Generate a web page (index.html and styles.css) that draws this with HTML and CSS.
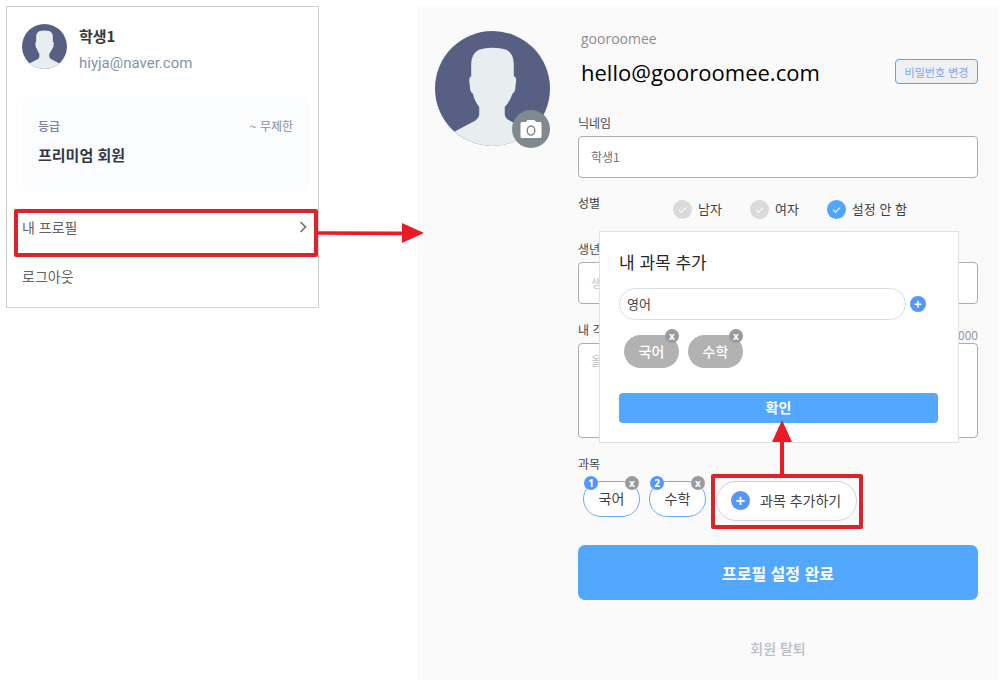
FILE: index.html
```html
<!DOCTYPE html>
<html lang="ko">
<head>
<meta charset="utf-8">
<meta name="viewport" content="width=device-width, initial-scale=1">
<title>내 프로필</title>
<link rel="stylesheet" href="styles.css">
</head>
<body>
<svg class="defs" aria-hidden="true">
  <symbol id="person" viewBox="75 93 343 343">
    <clipPath id="round"><circle cx="246.500" cy="264.500" r="171.500"/></clipPath>
    <g clip-path="url(#round)">
      <rect x="75" y="93" width="343" height="343" fill="#576083"/>
      <path fill="#e8eef0" d="M183 228V190Q184 160 206 149Q224 143 246 143Q270 143 288 149Q309 160 310 190V228Q317 230 317 240L314 268Q312 277 306 280Q298 304 283 320V340Q283 351 293 358L360 394L400 440H90L134 393L197 359Q207 351 207 342V320Q194 304 188 280Q182 277 180 268L177 240Q177 230 183 228Z"/>
    </g>
  </symbol>
  <symbol id="plus" viewBox="0 0 16 16">
    <circle cx="8" cy="8" r="8" fill="#5596fb"/>
    <path d="M8 4.800V11.800M4.500 8.300H11.500" stroke="#fff" stroke-width="1.500"/>
  </symbol>
</svg>
<main class="page">
  <aside class="account">
    <div class="user">
      <svg class="user-avatar" role="img" aria-label="학생1"><use href="#person"/></svg>
      <div>
        <p class="user-name">학생1</p>
        <p class="user-mail">hiyja@naver.com</p>
      </div>
    </div>
    <section class="grade">
      <div class="grade-top"><span class="grade-label">등급</span><span class="grade-term">~ 무제한</span></div>
      <p class="grade-name">프리미엄 회원</p>
    </section>
    <nav>
      <div class="menu-mark">
        <a class="menu-link" href="#profile">내 프로필
          <svg class="chevron" viewBox="0 0 8 12" aria-hidden="true"><path d="M1.500 1L6.500 6L1.500 11" fill="none" stroke="#707275" stroke-width="1.700"/></svg>
        </a>
        <svg class="arrow-right" viewBox="0 0 108 20" aria-hidden="true"><path d="M0 8.200L86 8.600V0L108 10L86 20V12.200L0 11.800Z" fill="#e91c26"/></svg>
      </div>
      <a class="menu-link logout" href="#logout">로그아웃</a>
    </nav>
  </aside>

  <section class="profile" id="profile">
    <div class="photo">
      <svg class="photo-image" role="img" aria-label="프로필 사진"><use href="#person"/></svg>
      <button class="camera" type="button" aria-label="사진 변경">
        <svg viewBox="0 0 22 20" aria-hidden="true"><path fill="#fff" d="M2 3H6L7.500 1H14.500L16 3H20Q21.500 3 21.500 4.500V17.500Q21.500 19 20 19H2Q.5 19 .5 17.500V4.500Q.5 3 2 3Z"/><ellipse cx="11" cy="11.500" rx="3.800" ry="4.500" fill="none" stroke="#7f8a8e" stroke-width="1.400"/></svg>
      </button>
    </div>
    <form class="form">
      <header class="identity">
        <div>
          <p class="org">gooroomee</p>
          <h1 class="mail">hello@gooroomee.com</h1>
        </div>
        <button class="password" type="button">비밀번호 변경</button>
      </header>
      <label class="label" for="nick">닉네임</label>
      <input class="field" id="nick" type="text" value="학생1">
      <div class="details">
        <div class="gender" role="radiogroup" aria-labelledby="gender-label">
          <span class="gender-label" id="gender-label">성별</span>
          <label class="option"><input type="radio" name="gender">남자</label>
          <label class="option"><input type="radio" name="gender">여자</label>
          <label class="option"><input type="radio" name="gender" checked>설정 안 함</label>
        </div>
        <label class="label" for="birth">생년월일</label>
        <input class="field" id="birth" type="text" placeholder="생년월일">
        <div class="label-row"><label class="label" for="memo">내 각오</label><span class="count">0/1000</span></div>
        <textarea class="field memo" id="memo" placeholder="올해의 각오"></textarea>
        <section class="dialog" role="dialog" aria-labelledby="dialog-title">
          <h2 class="dialog-title" id="dialog-title">내 과목 추가</h2>
          <div class="entry">
            <input class="entry-input" type="text" value="영어" aria-label="과목">
            <button class="icon-button" type="button" aria-label="추가"><svg class="plus"><use href="#plus"/></svg></button>
          </div>
          <ul class="chips chips-grey">
            <li class="chip grey">국어<button class="badge remove" type="button" aria-label="국어 삭제">x</button></li>
            <li class="chip grey">수학<button class="badge remove" type="button" aria-label="수학 삭제">x</button></li>
          </ul>
          <button class="confirm" type="button">확인</button>
        </section>
      </div>
      <p class="label subject-label">과목</p>
      <div class="subjects">
        <ul class="chips">
          <li class="chip">국어<span class="badge order">1</span><button class="badge remove" type="button" aria-label="국어 삭제">x</button></li>
          <li class="chip">수학<span class="badge order">2</span><button class="badge remove" type="button" aria-label="수학 삭제">x</button></li>
        </ul>
        <div class="add-mark">
          <button class="add" type="button"><svg class="plus plus-large"><use href="#plus"/></svg>과목 추가하기</button>
          <svg class="arrow-up" viewBox="0 0 20 58" aria-hidden="true"><path d="M10 0L20 22H12V58H8V22H0Z" fill="#e91c26"/></svg>
        </div>
      </div>
      <button class="submit" type="button">프로필 설정 완료</button>
      <a class="leave" href="#leave">회원 탈퇴</a>
    </form>
  </section>
</main>
</body>
</html>
```
FILE: styles.css
```css
* { box-sizing: border-box; }

body {
  margin: 0;
  background: #fff;
  color: #3c3f44;
  font-family: "Noto Sans CJK KR", sans-serif;
  font-size: 14px;
  line-height: 20px;
}

p, h1, h2, ul { margin: 0; padding: 0; }
ul { list-style: none; }
a { color: inherit; text-decoration: none; }
button, input, textarea { font: inherit; color: inherit; }
button { padding: 0; border: 0; background: none; cursor: pointer; }
svg { display: block; }
.defs { position: absolute; width: 0; height: 0; }

.page {
  display: grid;
  grid-template-columns: 313fr 581fr;
  align-items: start;
  gap: 98px;
  padding: 6px 9px 10px 6px;
}

/* Account card */
.account {
  padding: 17px 0 17px;
  border: 1px solid #cfcfd1;
}
.user { display: flex; gap: 12px; padding: 0 15px; }
.user-avatar { width: 45px; height: 45px; }
.user-name { font-size: 15px; font-weight: 700; line-height: 24px; color: #36373b; }
.user-mail { margin-top: 4px; font-family: Roboto, sans-serif; font-size: 15px; line-height: 22px; color: #8594a8; }
.grade {
  margin: 23px 9px 0 16px;
  padding: 19px 16px 24px 15px;
  background: #fafcfe;
}
.grade-top { display: flex; justify-content: space-between; font-size: 12px; }
.grade-label { font-weight: 500; color: #7a8594; }
.grade-term { color: #8b8f94; }
.grade-name { margin-top: 7px; font-size: 15px; font-weight: 700; line-height: 24px; color: #333844; }
.menu-mark {
  position: relative;
  margin: 18px 0 0 7px;
  padding-bottom: 12px;
  border: 4px solid #dc222b;
  border-radius: 2px;
}
.menu-link {
  display: flex;
  justify-content: space-between;
  align-items: center;
  padding: 4px 7px 4px 4px;
  color: #606367;
}
.chevron { width: 8px; height: 12px; }
.arrow-right {
  position: absolute;
  top: 10px;
  left: 100%;
  width: 112px;
  height: 20px;
}
.logout { margin-top: 5px; padding-left: 15px; }

/* Profile panel */
.profile {
  display: flex;
  gap: 28px;
  padding: 25px 20px 22px 18px;
  background: #fafafa;
}
.photo { position: relative; flex: none; align-self: flex-start; }
.photo-image { width: 115px; height: 115px; }
.camera {
  position: absolute;
  right: 0;
  bottom: -2px;
  display: grid;
  place-items: center;
  width: 38px;
  height: 38px;
  border-radius: 50%;
  background: #7f8a8e;
}
.camera svg { width: 22px; height: 20px; }
.form { flex: 1; min-width: 0; display: flex; flex-direction: column; }
.identity {
  display: flex;
  justify-content: space-between;
  align-items: flex-end;
  margin-bottom: 27px;
  font-family: "Open Sans", "Noto Sans", sans-serif;
}
.identity > div { padding-left: 3px; }
.org { font-size: 14px; line-height: 16px; color: #8d8d8d; }
.mail { margin-top: 10px; font-size: 22px; font-weight: 400; line-height: 30px; color: #000; }
.password {
  width: 83px;
  height: 25px;
  margin-bottom: 3px;
  border: 1px solid #55a5f5;
  border-radius: 4px;
  background: #eff0f1;
  color: #84a5f3;
  font-family: "Noto Sans CJK KR", sans-serif;
  font-size: 11px;
}
.label { display: block; margin-bottom: 4px; font-size: 12px; line-height: 18px; color: #44474b; }
.field {
  display: block;
  width: 100%;
  height: 42px;
  padding: 0 12px 2px;
  border: 1px solid #a9adb0;
  border-radius: 4px;
  background: #fff;
  color: #6f7276;
  font-size: 12px;
}
.field::placeholder { color: #bfc1c4; }
.memo { height: 95px; padding: 7px 12px; resize: none; }
.details { position: relative; margin-top: 21px; }
.gender { display: flex; align-items: center; gap: 28px; margin-bottom: 21px; }
.gender-label { width: 67px; padding-bottom: 12px; font-size: 12px; line-height: 8px; }
.option { display: flex; align-items: center; gap: 6px; font-size: 13px; }
.option input {
  appearance: none;
  display: grid;
  place-items: center;
  width: 19px;
  height: 19px;
  margin: 0;
  border-radius: 50%;
  background: #dadada;
}
.option input::after {
  content: "";
  width: 6px;
  height: 3px;
  border: solid #fff;
  border-width: 0 0 1px 1px;
  transform: rotate(-45deg);
}
.option input:checked { background: #4fa6fc; }
.label-row { display: flex; justify-content: space-between; margin-top: 17px; }
.count { padding-top: 6px; font-size: 12px; line-height: 16px; color: #96999c; }

/* Add-subject dialog */
.dialog {
  position: absolute;
  top: 32px;
  left: 21px;
  right: 19px;
  padding: 18px 20px 19px 19px;
  border: 1px solid #dfe2e3;
  background: #fff;
}
.dialog-title { font-size: 17px; font-weight: 400; line-height: 24px; color: #25272c; }
.entry { display: flex; align-items: center; gap: 4px; margin-top: 14px; padding-right: 12px; }
.entry-input {
  flex: 1;
  min-width: 0;
  height: 32px;
  padding: 0 7px 2px;
  border: 1px solid #d8dde0;
  border-radius: 16px;
  background: #fff;
  font-size: 13px;
}
.plus { width: 16px; height: 16px; }
.plus-large { width: 19px; height: 19px; }
.chips { display: flex; gap: 9px; padding: 7px 0 0 5px; }
.chips-grey { padding-top: 15px; }
.chip {
  position: relative;
  width: 57px;
  height: 36px;
  border: 1px solid #66aef5;
  border-radius: 18px;
  background: #fff;
  font-size: 14px;
  line-height: 32px;
  text-align: center;
}
.chip.grey { width: 55px; height: 33px; border: 0; background: #b2b2b2; color: #fff; font-weight: 500; }
.badge {
  position: absolute;
  top: -6px;
  width: 14px;
  height: 14px;
  border-radius: 50%;
  color: #fff;
  font: 700 10px/14px "Noto Sans", sans-serif;
  text-align: center;
}
.order { left: 0; background: #5596fb; }
.remove { right: 0; background: #9a9a9a; line-height: 12px; }
.confirm {
  display: block;
  width: 100%;
  height: 30px;
  margin-top: 25px;
  padding-bottom: 2px;
  border-radius: 4px;
  background: #52a8fe;
  color: #fff;
  font-weight: 700;
}

/* Subjects */
.subject-label { margin: 17px 0 1px; }
.subjects { display: flex; align-items: flex-start; gap: 5px; }
.add-mark { position: relative; border: 4px solid #dc222b; border-radius: 2px; padding: 3px 2px 4px 1px; }
.add {
  display: flex;
  align-items: center;
  gap: 10px;
  height: 40px;
  padding: 0 15px 2px 14px;
  border: 1px solid #cfd4db;
  border-radius: 20px;
  background: #fff;
  white-space: nowrap;
}
.arrow-up { position: absolute; bottom: 100%; left: 57px; width: 20px; height: 58px; }
.submit {
  height: 55px;
  margin-top: 16px;
  border-radius: 7px;
  background: #52a8fe;
  color: #fff;
  font-size: 16px;
  font-weight: 700;
}
.leave { align-self: center; margin-top: 38px; font-weight: 500; color: #b8bdc1; }
```
